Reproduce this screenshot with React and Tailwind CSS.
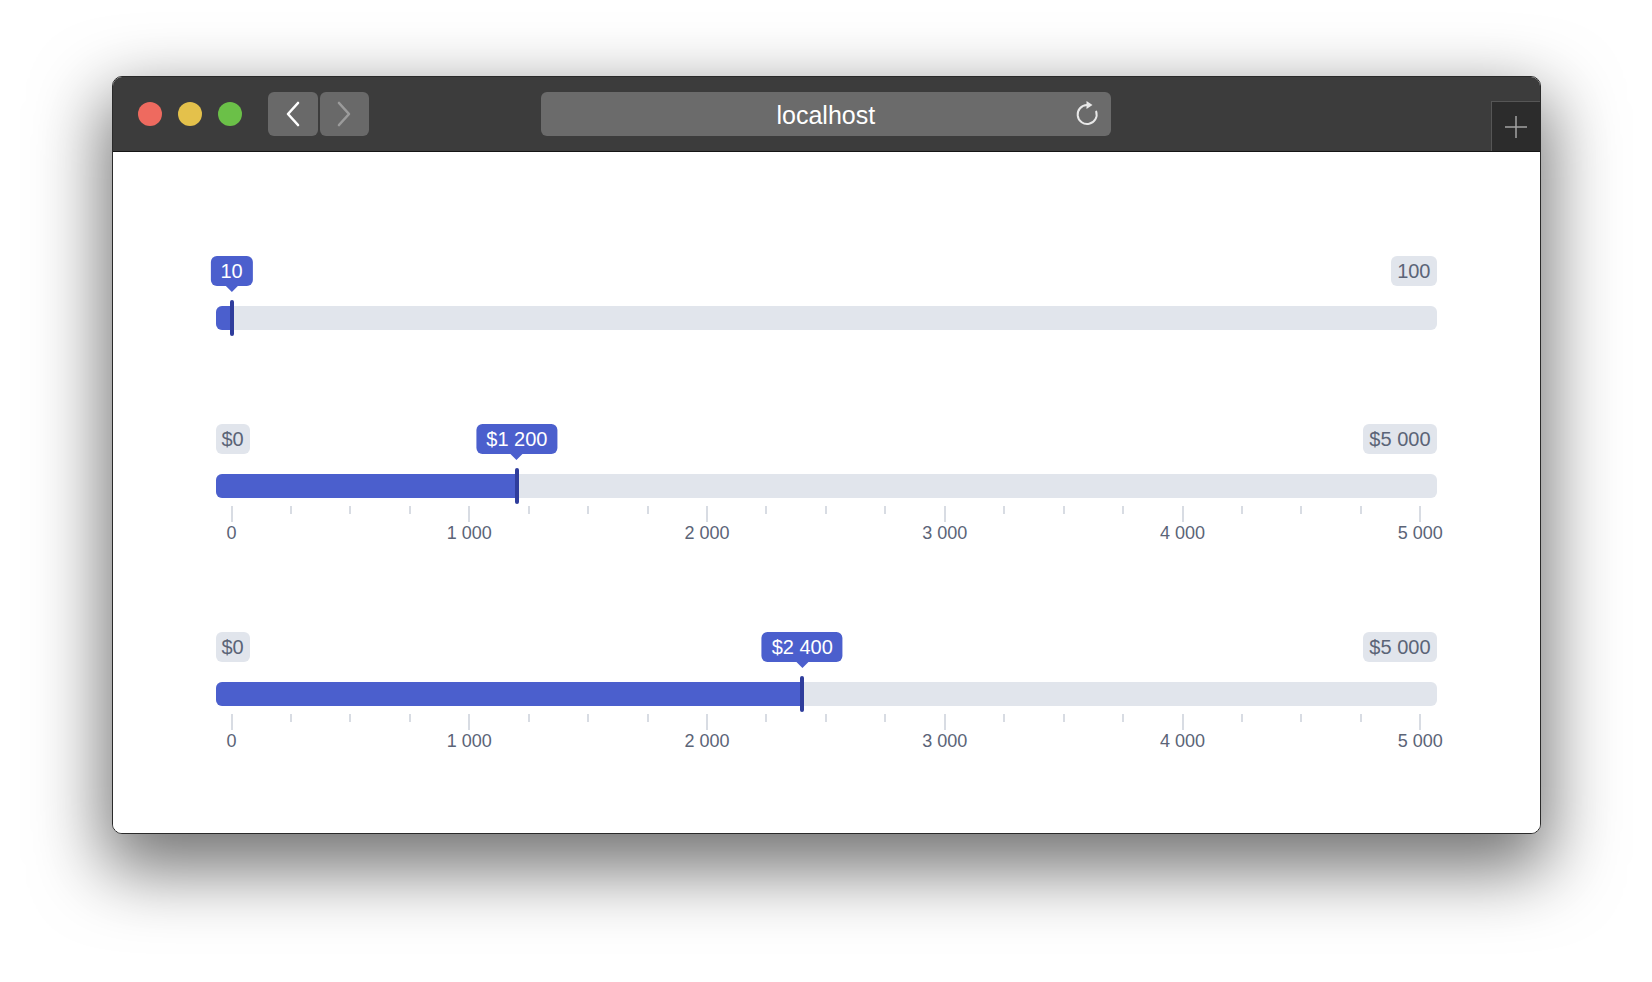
import React from 'react';

const FONT = { fontFamily: '"Liberation Sans", Arial, sans-serif' };

function fmt(n) {
  return String(n).replace(/\B(?=(\d{3})+(?!\d))/g, ' ');
}

function Badge({ children }) {
  return (
    <span className="flex h-[30px] items-center rounded-[6px] bg-[#e1e5ec] px-[6px] text-[20px] text-[#5b6477]">
      {children}
    </span>
  );
}

function Ticks() {
  return (
    <div className="mx-[15px] mt-[8px] flex h-[42px] justify-between">
      {Array.from({ length: 21 }).map((_, i) => (
        <div key={i} className="relative w-[2px]">
          <div className={i % 4 === 0 ? 'h-[16px] w-[2px] bg-[#d8dce3]' : 'h-[8px] w-[2px] bg-[#d8dce3]'} />
          {i % 4 === 0 && (
            <span className="absolute left-1/2 top-[16px] -translate-x-1/2 whitespace-nowrap text-[18px] leading-[22px] text-[#5b6477]">
              {fmt(i * 250)}
            </span>
          )}
        </div>
      ))}
    </div>
  );
}

function Slider({ min, max, value, prefix = '', ticks, className }) {
  const p = (value - min) / (max - min);
  const pos = `calc(16px + ${p} * (100% - 32px))`;
  return (
    <div className={className}>
      <div className="relative flex h-[30px] items-start justify-between">
        {value !== min ? <Badge>{prefix + fmt(min)}</Badge> : <span />}
        <Badge>{prefix + fmt(max)}</Badge>
        <div className="absolute top-0 flex -translate-x-1/2 flex-col items-center" style={{ left: pos }}>
          <span className="flex h-[30px] items-center rounded-[6px] bg-[#4b5fcd] px-[10px] text-[20px] text-white">
            {prefix + fmt(value)}
          </span>
          <span className="h-0 w-0 border-l-[6px] border-r-[6px] border-t-[6px] border-l-transparent border-r-transparent border-t-[#4b5fcd]" />
        </div>
      </div>
      <div className="relative mt-[20px] h-[24px] rounded-[6px] bg-[#e1e5ec]">
        <div className="absolute inset-y-0 left-0 rounded-l-[6px] bg-[#4b5fcd]" style={{ width: pos }} />
        <div
          className="absolute top-[-6px] h-[36px] w-[4px] -translate-x-1/2 rounded-full bg-[#2f3d9c]"
          style={{ left: pos }}
        />
      </div>
      {ticks && <Ticks />}
    </div>
  );
}

function TitleBar() {
  return (
    <div className="flex h-[75px] shrink-0 items-center border-b border-[#151515] bg-[#3c3c3c] pl-[25px]">
      <div className="flex gap-[16px]">
        <span className="h-[24px] w-[24px] rounded-full bg-[#ee6a5f]" />
        <span className="h-[24px] w-[24px] rounded-full bg-[#e4c14b]" />
        <span className="h-[24px] w-[24px] rounded-full bg-[#6bc048]" />
      </div>
      <div className="ml-[26px] flex gap-[2px]">
        <button className="flex h-[44px] w-[50px] items-center justify-center rounded-[6px] bg-[#696969]">
          <svg width="14" height="26" viewBox="0 0 14 26">
            <path d="M12 2 L2 13 L12 24" stroke="#ffffff" strokeWidth="2.6" fill="none" strokeLinecap="round" strokeLinejoin="round" />
          </svg>
        </button>
        <button className="flex h-[44px] w-[49px] items-center justify-center rounded-[6px] bg-[#696969]">
          <svg width="14" height="26" viewBox="0 0 14 26">
            <path d="M2 2 L12 13 L2 24" stroke="#9b9b9b" strokeWidth="2.6" fill="none" strokeLinecap="round" strokeLinejoin="round" />
          </svg>
        </button>
      </div>
      <div className="relative ml-[172px] flex h-[44px] w-[570px] items-center rounded-[6px] bg-[#6b6b6b] pl-[236px]">
        <span className="mt-[3px] text-[25px] text-white">localhost</span>
        <svg className="absolute right-[12px] top-[9px]" width="24" height="26" viewBox="0 0 24 26">
          <path d="M12 4 A9.5 9.5 0 1 0 21.2 10.6" stroke="#e8e8e8" strokeWidth="2" fill="none" strokeLinecap="round" />
          <path d="M11.5 0 L17.5 4 L11.5 8 Z" fill="#e8e8e8" />
        </svg>
      </div>
      <div className="ml-auto flex h-[50px] w-[49px] items-center justify-center self-end border-l border-t border-[#565656] bg-[#2c2c2c]">
        <svg width="24" height="24" viewBox="0 0 24 24">
          <path d="M12 1 V23 M1 12 H23" stroke="#a3a3a3" strokeWidth="1.5" />
        </svg>
      </div>
    </div>
  );
}

export default function App() {
  return (
    <div className="h-[982px] w-full overflow-hidden bg-white pt-[76px]" style={FONT}>
      <div className="mx-auto flex h-[758px] w-[1429px] flex-col overflow-hidden rounded-[10px] border border-[#2a2a2a] bg-white shadow-[0_28px_70px_8px_rgba(0,0,0,0.55)]">
        <TitleBar />
        <div className="flex-1 bg-white px-[103px] pt-[104px]">
          <Slider min={10} max={100} value={10} />
          <Slider className="mt-[94px]" min={0} max={5000} value={1200} prefix="$" ticks />
          <Slider className="mt-[84px]" min={0} max={5000} value={2400} prefix="$" ticks />
        </div>
      </div>
    </div>
  );
}
